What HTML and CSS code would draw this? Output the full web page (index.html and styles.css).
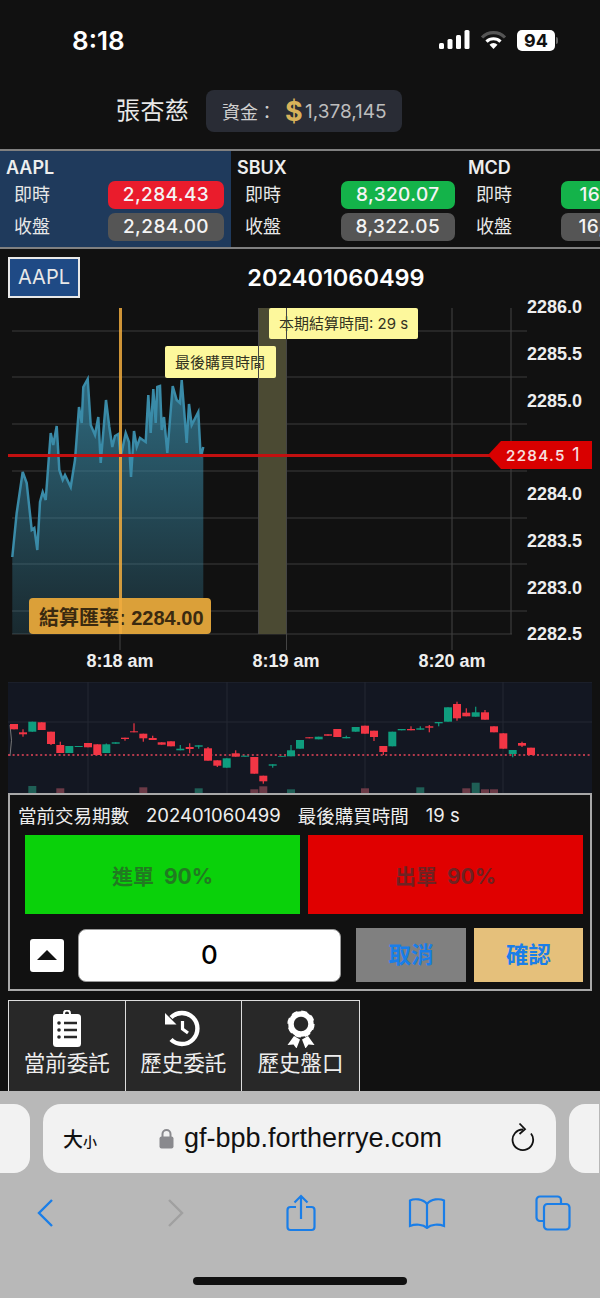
FILE: index.html
```html
<!DOCTYPE html>
<html lang="zh-Hant">
  <head>
    <meta charset="UTF-8" />
    <meta name="viewport" content="width=device-width, initial-scale=1.0" />
    <title>張杏慈</title>
    <link rel="stylesheet" href="styles.css">
  </head>
  <body>
    <div class="status-bar">
      <span class="clock">8:18</span>
      <div class="status-icons">
        <svg width="31" height="20" viewBox="0 0 31 20" fill="#fff">
          <rect x="0" y="13" width="5" height="6" rx="1.5" />
          <rect x="8.5" y="9" width="5" height="10" rx="1.5" />
          <rect x="17" y="5" width="5" height="14" rx="1.5" />
          <rect x="25.5" y="0" width="5" height="19" rx="1.5" />
        </svg>
        <svg width="27" height="20" viewBox="0 0 27 20" fill="none" stroke-linecap="butt">
          <path d="M2 7.5a16 16 0 0 1 23 0" stroke="#555" stroke-width="3.2" />
          <path d="M6.5 11.6a10 10 0 0 1 14 0" stroke="#fff" stroke-width="3.2" />
          <path d="M13.5 19l-4-4.2a5.6 5.6 0 0 1 8 0z" fill="#fff" />
        </svg>
        <div class="battery"><span class="battery-level">94</span><i class="battery-nub"></i></div>
      </div>
    </div>

    <header class="user-bar">
      <span class="user-name">張杏慈</span>
      <div class="funds">
        <span class="funds-label">資金：</span>
        <span class="funds-sign">$</span>
        <span class="funds-value">1,378,145</span>
      </div>
    </header>

    <section class="tickers">
      <div class="ticker active">
        <div class="ticker-name">AAPL</div>
        <div class="ticker-row"><span>即時</span><b class="pill red">2,284.43</b></div>
        <div class="ticker-row"><span>收盤</span><b class="pill gray">2,284.00</b></div>
      </div>
      <div class="ticker narrow">
        <div class="ticker-name">SBUX</div>
        <div class="ticker-row"><span>即時</span><b class="pill green">8,320.07</b></div>
        <div class="ticker-row"><span>收盤</span><b class="pill gray">8,322.05</b></div>
      </div>
      <div class="ticker wide">
        <div class="ticker-name">MCD</div>
        <div class="ticker-row"><span>即時</span><b class="pill green">16,512.30</b></div>
        <div class="ticker-row"><span>收盤</span><b class="pill gray">16,520.10</b></div>
      </div>
    </section>

    <div class="chart-head">
      <span class="symbol-btn">AAPL</span>
      <span class="chart-title">202401060499</span>
    </div>

    <svg class="price-chart" width="600" height="382" viewBox="0 300 600 382">
      <defs>
        <linearGradient id="areaFill" x1="0" y1="0" x2="0" y2="1">
          <stop offset="0" stop-color="#3a8ba8" stop-opacity="0.72" />
          <stop offset="1" stop-color="#3a8ba8" stop-opacity="0.2" />
        </linearGradient>
      </defs>
      <path class="grid" d="M12 331H527M12 377H527M12 424H527M12 471H527M12 518H527M12 564H527M12 611H527M12 634H512M452 308V650M511 308V634" />
      <rect class="band" x="258" y="308" width="29" height="326" />
      <path id="areaFillPath" fill="url(#areaFill)" />
      <path id="areaLine" class="area-line" />
      <rect class="tip" x="269" y="308" width="149" height="31" rx="2" />
      <text class="tip-text" x="279" y="329">本期結算時間: 29 s</text>
      <rect class="tip" x="165" y="346" width="111" height="32" rx="2" />
      <text class="tip-text" x="175" y="368">最後購買時間</text>
      <path class="band-edge" d="M258.5 308V634M286.5 308V650M120 634V650" />
      <rect class="settle" x="29" y="598" width="182" height="36" rx="4" />
      <text class="settle-text" x="39" y="625">結算匯率: 2284.00</text>
      <rect class="now-line" x="119" y="308" width="3" height="326" />
      <rect class="last-line" x="8" y="454" width="484" height="3" />
      <polygon class="last-tag" points="488,455 501,441 592,441 592,469 501,469" />
      <text class="last-text" x="506" y="461">2284.5</text>
      <text class="last-count" x="572" y="461">1</text>
      <g class="axis-y">
        <text x="527" y="313">2286.0</text>
        <text x="527" y="360">2285.5</text>
        <text x="527" y="407">2285.0</text>
        <text x="527" y="500">2284.0</text>
        <text x="527" y="547">2283.5</text>
        <text x="527" y="594">2283.0</text>
        <text x="527" y="640">2282.5</text>
      </g>
      <g class="axis-x">
        <text x="120" y="667">8:18 am</text>
        <text x="286" y="667">8:19 am</text>
        <text x="452" y="667">8:20 am</text>
      </g>
    </svg>

    <svg id="candles" class="candles" width="584" height="111" viewBox="8 682 584 111">
      <path class="candle-grid" d="M8 682H592M8 722H592M88 682V793M227 682V793M365 682V793M503 682V793" />
      <path class="candle-mark" d="M10 725Q13 740 10 756" />
      <line class="candle-last" x1="8" y1="755" x2="592" y2="755" />
    </svg>

    <section class="trade">
      <div class="trade-info">
        <span>當前交易期數</span>
        <span>202401060499</span>
        <span>最後購買時間</span>
        <span>19 s</span>
      </div>
      <div class="trade-sides">
        <div class="side buy">進單&nbsp;&nbsp;90%</div>
        <div class="side sell">出單&nbsp;&nbsp;90%</div>
      </div>
      <div class="trade-order">
        <span class="stepper"><i class="stepper-arrow"></i></span>
        <div class="amount">0</div>
        <span class="order-btn cancel">取消</span>
        <span class="order-btn confirm">確認</span>
      </div>
    </section>

    <nav class="tabs">
      <a class="tab">
        <svg width="36" height="38" viewBox="0 0 36 38">
          <rect x="4" y="4" width="28" height="33" rx="3.5" fill="#fff" />
          <circle cx="18" cy="3.5" r="3" fill="none" stroke="#fff" stroke-width="2" />
          <path d="M15 13H28M15 20H28M15 27H28" stroke="#282828" stroke-width="2.4" />
          <circle cx="10" cy="13" r="1.8" fill="#282828" />
          <circle cx="10" cy="20" r="1.8" fill="#282828" />
          <circle cx="10" cy="27" r="1.8" fill="#282828" />
        </svg>
        <span>當前委託</span>
      </a>
      <a class="tab">
        <svg width="38" height="38" viewBox="0 0 38 38" fill="none" stroke="#fff">
          <path d="M7 7.5A15.5 15.5 0 1 1 7 29.5" stroke-width="4.4" />
          <polygon points="1,3 1,14.5 12.5,14.5" fill="#fff" stroke="none" />
          <path d="M18.5 11V19L24 23" stroke-width="3.2" />
        </svg>
        <span>歷史委託</span>
      </a>
      <a class="tab">
        <svg width="30" height="38" viewBox="0 0 30 38" fill="#fff">
          <path d="M8 26L1.500 35L7.500 34.500L10.500 38.500L14 29.500ZM22 26L28.500 35L22.500 34.500L19.500 38.500L16 29.500Z" />
          <circle cx="15" cy="14" r="10" fill="none" stroke="#fff" stroke-width="5.500" />
          <circle cx="15" cy="14" r="12.500" fill="none" stroke="#fff" stroke-width="2.200" stroke-dasharray="6 3.800" />
        </svg>
        <span>歷史盤口</span>
      </a>
    </nav>

    <div class="safari">
      <div class="url-row">
        <div class="url-stub"></div>
        <div class="url-bar">
          <span class="url-size">大<small>小</small></span>
          <div class="url-host">
            <svg width="15" height="21" viewBox="0 0 15 21">
              <path d="M3.5 9V6a4 4 0 0 1 8 0v3" fill="none" stroke="#8a8a8e" stroke-width="2" />
              <rect x="0.5" y="8.5" width="14" height="12" rx="2" fill="#8a8a8e" />
            </svg>
            <span>gf-bpb.fortherrye.com</span>
          </div>
          <svg class="url-reload" width="24" height="30" viewBox="0 0 24 30" fill="none" stroke="#111" stroke-width="1.8">
            <path d="M20 11.5A10.3 10.3 0 1 1 12 7.5" />
            <path d="M8.5 1.5L14 7.2L8.5 12" />
          </svg>
        </div>
        <div class="url-stub right"></div>
      </div>
      <div class="toolbar">
        <svg width="18" height="30" viewBox="0 0 18 30" fill="none" stroke="#1a7ee8" stroke-width="2.4">
          <path d="M16 2L3 15L16 28" />
        </svg>
        <svg width="18" height="30" viewBox="0 0 18 30" fill="none" stroke="#a0a0a0" stroke-width="2.4">
          <path d="M2 2L15 15L2 28" />
        </svg>
        <svg width="30" height="38" viewBox="0 0 30 38" fill="none" stroke="#1a7ee8" stroke-width="2.2">
          <path d="M10 13H4.500a3 3 0 0 0-3 3V33a3 3 0 0 0 3 3H25.500a3 3 0 0 0 3-3V16a3 3 0 0 0-3-3H20" />
          <path d="M15 25V2M8.500 8.500L15 2L21.500 8.500" />
        </svg>
        <svg width="38" height="32" viewBox="0 0 38 32" fill="none" stroke="#1a7ee8" stroke-width="2.2">
          <path d="M19 7C15 1.500 6 1.500 2 3.500V29C7 27 15 27 19 31C23 27 31 27 36 29V3.500C32 1.500 23 1.500 19 7V31" />
        </svg>
        <svg width="36" height="36" viewBox="0 0 36 36" fill="none" stroke="#1a7ee8" stroke-width="2.2">
          <path d="M9 26H5a3.500 3.500 0 0 1-3.500-3.500V5A3.500 3.500 0 0 1 5 1.500H22.500A3.500 3.500 0 0 1 26 5V9" />
          <rect x="9" y="9" width="25.500" height="25.500" rx="3.500" />
        </svg>
      </div>
      <div class="home-bar"></div>
    </div>

    <script src="chart.js"></script>
  </body>
</html>
```

FILE: styles.css
```css
:root {
  --bg: #111111;
  --blue: #1a7ee8;
  --cjk: Inter, "Noto Sans CJK TC", sans-serif;
}

body {
  margin: 0;
  width: 600px;
  height: 1298px;
  overflow: hidden;
  background-color: var(--bg);
  color: #ffffff;
  font-family: var(--cjk);
}

svg {
  display: block;
}

/* status bar */
.status-bar {
  height: 80px;
  box-sizing: border-box;
  padding: 0 42px 0 72px;
  display: flex;
  justify-content: space-between;
  align-items: center;
}

.clock {
  font-size: 26px;
  font-weight: 600;
}

.status-icons {
  display: flex;
  align-items: center;
  gap: 10px;
}

.battery {
  display: flex;
  align-items: center;
  gap: 1px;
}

.battery-level {
  width: 38px;
  height: 21px;
  border-radius: 5px;
  background-color: #ffffff;
  color: #111111;
  font-size: 18px;
  font-weight: 700;
  line-height: 21px;
  text-align: center;
}

.battery-nub {
  width: 2px;
  height: 7px;
  border-radius: 0 2px 2px 0;
  background-color: #666666;
}

/* user */
.user-bar {
  height: 69px;
  box-sizing: border-box;
  padding: 10px 0 0 116px;
  display: flex;
  align-items: flex-start;
  gap: 17px;
}

.user-name {
  width: 73px;
  font-size: 24px;
  line-height: 42px;
  color: #e8e8e8;
  letter-spacing: 0.4px;
  white-space: nowrap;
}

.funds {
  width: 196px;
  height: 42px;
  box-sizing: border-box;
  padding-left: 16px;
  display: flex;
  align-items: center;
  background-color: #292c35;
  border-radius: 8px;
}

.funds-label {
  width: 63px;
  font-size: 18px;
  color: #cfcfcf;
}

.funds-sign {
  width: 20px;
  font-size: 27px;
  font-weight: 700;
  color: #d8b25a;
}

.funds-value {
  font-size: 19px;
  color: #bdbdbd;
}

/* tickers */
.tickers {
  height: 100px;
  box-sizing: border-box;
  border-top: 2px solid #808080;
  border-bottom: 2px solid #808080;
  display: flex;
  overflow: hidden;
}

.ticker {
  flex: 0 0 231px;
  box-sizing: border-box;
  padding: 6px 7px 0 6px;
}

.ticker.active {
  background-color: #1f3a5c;
}

.ticker.wide {
  flex-basis: 232px;
}

.ticker-name {
  height: 24px;
  font-size: 18px;
  font-weight: 600;
  line-height: 22px;
  color: #eeeeee;
}

.ticker-row {
  height: 28px;
  margin-bottom: 3.5px;
  padding-left: 8px;
  display: flex;
  justify-content: space-between;
  align-items: center;
  font-size: 18px;
  color: #e8e8e8;
  white-space: nowrap;
}

.ticker-row span {
  padding-bottom: 4px;
}

.pill {
  width: 116px;
  height: 28px;
  flex: none;
  border-radius: 7px;
  font-size: 19px;
  font-weight: 500;
  line-height: 28px;
  letter-spacing: 0.4px;
  text-align: center;
  color: #f4f4f4;
}

.pill.red {
  background-color: #ea1c2c;
}

.pill.green {
  background-color: #14b34a;
}

.pill.gray {
  background-color: #555555;
}

.narrow .pill {
  width: 114.5px;
}

.wide .pill.green {
  width: 126px;
}

.wide .pill.gray {
  width: 123px;
  margin-right: 3px;
}

/* price chart */
.chart-head {
  height: 51px;
  box-sizing: border-box;
  padding: 8px 8px 0;
  display: flex;
  align-items: flex-start;
}

.symbol-btn {
  width: 72px;
  height: 41px;
  box-sizing: border-box;
  border: 2px solid #e8e8e8;
  background-color: #1f4a85;
  font-size: 20px;
  line-height: 37px;
  text-align: center;
  color: #e8e8e8;
}

.chart-title {
  flex: 1;
  font-size: 23.5px;
  font-weight: 600;
  line-height: 41px;
  text-align: center;
}

.grid {
  fill: none;
  stroke: #3c3c3c;
  stroke-width: 1.2;
}

.band {
  fill: #4b4a33;
}

.band-edge {
  fill: none;
  stroke: #444444;
  stroke-width: 1;
}

.area-line {
  fill: none;
  stroke: #3a8ba8;
  stroke-width: 2.5;
}

.tip {
  fill: #fdf89c;
}

.tip-text {
  font-size: 15px;
  fill: #333322;
}

.settle {
  fill: #dba039;
}

.settle-text {
  font-family: "Liberation Sans", "Noto Sans CJK TC", sans-serif;
  font-size: 20px;
  font-weight: 700;
  fill: #3a2a10;
}

.now-line {
  fill: #f0ab3e;
  fill-opacity: 0.85;
}

.last-line {
  fill: #c21010;
}

.last-tag {
  fill: #d90000;
}

.last-text {
  font-size: 15px;
  font-weight: 600;
  letter-spacing: 1.3px;
  fill: #f6dcdc;
}

.last-count {
  font-size: 19px;
  fill: #f6dcdc;
}

.axis-y text,
.axis-x text {
  font-family: "Liberation Sans", sans-serif;
  font-size: 18px;
  font-weight: 700;
  fill: #eeeeee;
}

.axis-x text {
  text-anchor: middle;
}

/* candles */
.candles {
  margin-left: 8px;
  background-color: #131722;
}

.candle-grid {
  fill: none;
  stroke: #242833;
  stroke-width: 1;
}

.candle-mark {
  fill: none;
  stroke: #777777;
  stroke-width: 1;
}

.candle-last {
  stroke: #e8455a;
  stroke-width: 1.3;
  stroke-dasharray: 2 2.600;
}

/* trade panel */
.trade {
  width: 584px;
  height: 198px;
  margin-left: 8px;
  box-sizing: border-box;
  border: 2px solid #a8a8a8;
}

.trade-info {
  height: 40px;
  padding-left: 8px;
  display: flex;
  align-items: center;
  gap: 17px;
  font-size: 18.5px;
  color: #eeeeee;
  white-space: nowrap;
}

.trade-sides {
  height: 79px;
  padding: 0 7px 0 15px;
  display: flex;
  gap: 8px;
}

.side {
  flex: 1;
  display: flex;
  justify-content: center;
  align-items: center;
  font-size: 21px;
  font-weight: 700;
}

.side.buy {
  background-color: #0ad10a;
  color: #217a21;
}

.side.sell {
  background-color: #e00000;
  color: #6e2222;
}

.trade-order {
  margin-top: 14px;
  padding: 0 7px 0 20px;
  display: flex;
  align-items: center;
}

.stepper {
  width: 34px;
  height: 33px;
  margin: 0 14px 0 0;
  display: flex;
  justify-content: center;
  align-items: center;
  background-color: #ffffff;
  border-radius: 3px;
}

.stepper-arrow {
  width: 0;
  height: 0;
  border-left: 10px solid transparent;
  border-right: 10px solid transparent;
  border-bottom: 10px solid #111111;
}

.amount {
  width: 263px;
  height: 53px;
  box-sizing: border-box;
  margin-right: 15px;
  border: 1.5px solid #999999;
  border-radius: 8px;
  background-color: #ffffff;
  color: #000000;
  font-size: 26px;
  font-weight: 500;
  line-height: 50px;
  text-align: center;
}

.order-btn {
  height: 54px;
  color: var(--blue);
  font-size: 22.5px;
  font-weight: 700;
  line-height: 54px;
  text-align: center;
}

.order-btn.cancel {
  width: 110px;
  margin-right: 8px;
  background-color: #808080;
}

.order-btn.confirm {
  width: 109px;
  background-color: #e5c07b;
}

/* tabs */
.tabs {
  margin: 9px 0 0 8px;
  height: 91px;
  display: flex;
}

.tab {
  width: 117.5px;
  box-sizing: border-box;
  border: 1.5px solid #dddddd;
  border-bottom: none;
  margin-right: -1px;
  padding-top: 9px;
  display: flex;
  flex-direction: column;
  align-items: center;
  background-color: #282828;
  font-size: 21.5px;
  line-height: 30px;
  color: #eeeeee;
}

.tab:last-child {
  width: 119px;
}

/* browser chrome */
.safari {
  height: 207px;
  box-sizing: border-box;
  padding-top: 13px;
  background-color: #b8b8b8;
  position: relative;
}

.url-row {
  display: flex;
  gap: 13px;
}

.url-stub {
  flex: 0 0 30px;
  height: 69px;
  border-radius: 0 16px 16px 0;
  background-color: #f2f2f2;
}

.url-stub.right {
  border-radius: 16px 0 0 16px;
}

.url-bar {
  flex: 0 0 513px;
  height: 69px;
  box-sizing: border-box;
  padding: 0 21px 0 20px;
  display: flex;
  align-items: center;
  border-radius: 18px;
  background-color: #f2f2f2;
  color: #111111;
}

.url-size {
  width: 96px;
  font-size: 20px;
  font-weight: 500;
}

.url-size small {
  font-size: 14px;
}

.url-host {
  flex: 1;
  display: flex;
  align-items: center;
  gap: 10px;
  font-family: "Liberation Sans", sans-serif;
  font-size: 27px;
}

.url-reload {
  margin-top: -4px;
}

.toolbar {
  height: 56px;
  margin-top: 12px;
  padding-left: 36px;
  display: grid;
  grid-template-columns: 131px 119px 122px 127px 36px;
  align-items: center;
}

.home-bar {
  position: absolute;
  left: 193px;
  bottom: 13px;
  width: 214px;
  height: 8px;
  border-radius: 4px;
  background-color: #111111;
}
```

FILE: chart.js
```js
const SVG_NS = "http://www.w3.org/2000/svg";

// price samples, x and y in chart pixels
const prices = [
  [12.3, 557], [16.7, 513], [22.7, 472], [26.7, 483], [31.7, 530], [34.3, 528],
  [37.3, 550], [40, 502], [42.7, 492], [45.7, 500], [50.7, 433], [53.3, 445],
  [56.7, 426], [59.3, 470], [62.7, 480], [65, 475], [70.7, 487], [75, 460],
  [79, 407], [81.7, 423], [83.3, 387], [87.7, 379], [90.7, 425], [95, 435],
  [98.3, 417], [100.7, 463], [106, 400], [109.3, 427], [112.3, 447], [115, 436],
  [118.3, 434], [120.7, 457], [125.7, 433], [129, 442], [131, 477], [134, 431],
  [136.7, 447], [140, 438], [145.7, 442], [148.3, 395], [150.7, 433], [153.3, 389],
  [155.7, 423], [157.3, 387], [160, 386], [161.7, 430], [164, 417], [167.3, 453],
  [172.7, 386], [176.7, 400], [180, 403], [181.7, 380], [186.7, 443], [189, 404],
  [191.7, 425], [198.3, 412], [200.7, 457], [203.3, 447],
];

const line = prices.map(([x, y], i) => `${i ? "L" : "M"}${x} ${y}`).join("");
document.getElementById("areaLine").setAttribute("d", line);
document
  .getElementById("areaFillPath")
  .setAttribute("d", `${line}L203.3 634L12.3 634Z`);

// candles: center x, body top, body bottom, wick top, wick bottom, up?
const candles = [
  [14, 724, 729.3, 724, 729.3, 0], [23, 732.3, 734.3, 729.3, 736.7, 0],
  [32.3, 721.7, 731.7, 721.7, 731.7, 1], [41.7, 722.3, 730, 722.3, 730, 0],
  [51, 731.7, 744, 731.7, 745, 0], [60.3, 745, 753, 741.7, 753, 0],
  [69.3, 746, 753, 746, 753, 1], [78.7, 746, 747, 746, 747, 1],
  [88, 743, 747.3, 743, 747.3, 0], [97.3, 744.3, 755, 744.3, 755, 0],
  [106.3, 744.3, 753, 743.5, 753, 1], [115.7, 742.3, 743.7, 742.3, 743.7, 1],
  [125, 737.7, 739, 737.7, 740.7, 0], [134, 731.3, 732.3, 723.3, 732.3, 0],
  [143.3, 733.7, 738.3, 733.7, 741.7, 0], [152.7, 738, 740, 735.7, 740, 0],
  [161.7, 742.3, 744.7, 742.3, 744.7, 0], [171, 741.3, 746.3, 741.3, 746.3, 0],
  [180.3, 748.7, 750.3, 745, 750.3, 1], [189.7, 747, 749, 743.3, 753.3, 0],
  [198.7, 745.3, 746.7, 745.3, 748.7, 1], [208, 748.3, 760.7, 747, 760.7, 0],
  [217.3, 760.3, 765.7, 760.3, 767, 0], [226.7, 758.3, 767.7, 758.3, 767.7, 1],
  [235.7, 753.3, 756.7, 750.3, 756.7, 0], [245, 755.7, 756.7, 755.7, 756.7, 1],
  [254.3, 757, 773.7, 757, 773.7, 0], [263.3, 775.7, 781.3, 775.7, 783.7, 0],
  [272.7, 764.3, 765.7, 764.3, 767.7, 1], [282, 756, 756.7, 756, 756.7, 1],
  [291, 750.3, 756.3, 745, 756.3, 1], [300, 740, 748.7, 740, 748.7, 1],
  [309.3, 737.3, 738.3, 737.3, 738.3, 0], [318.7, 736.7, 739.3, 736.7, 739.3, 1],
  [328, 734.3, 735.7, 734.3, 735.7, 0], [337.3, 729, 737, 729, 737, 0],
  [346.3, 737, 738.3, 735.7, 738.3, 1], [355.7, 727, 731.7, 727, 731.7, 1],
  [365, 725.7, 733.7, 725.7, 733.7, 0], [374, 730.7, 737, 730.7, 741, 0],
  [383.3, 746, 752, 746, 755, 0], [392.3, 731.7, 746.3, 731.7, 746.3, 1],
  [401.7, 729, 730.3, 729, 730.3, 1], [411, 729, 730.3, 726.3, 730.3, 0],
  [420.3, 728.3, 729.7, 726.3, 729.7, 1], [429.3, 726.3, 727.7, 725, 732.3, 0],
  [438.7, 722, 723.3, 722, 726.3, 1], [448, 707.3, 721.7, 707.3, 721.7, 1],
  [457, 704, 718.3, 701.7, 720.7, 0], [466.3, 712.7, 716.3, 708.3, 716.3, 0],
  [475.7, 712.3, 716.7, 706.7, 716.7, 1], [485, 712.3, 719.7, 710, 719.7, 0],
  [494, 726.3, 732.3, 726.3, 732.3, 0], [503.3, 733.3, 748.7, 733.3, 748.7, 0],
  [512.7, 750, 754, 750, 757.3, 1], [522, 743, 745.7, 741.7, 747, 0],
  [531, 747.7, 755, 747.7, 755, 0],
];

// volume stubs along the bottom edge: center x, top y, up?
const volumes = [
  [32.3, 786, 1], [60.3, 788.3, 0], [143.3, 787.3, 0], [198.7, 788.3, 1],
  [254.3, 789.3, 0], [263.3, 786.3, 0], [291, 789.3, 1], [365, 788.3, 0],
  [420.3, 787.3, 1], [466.3, 788.3, 0], [475.7, 782.7, 1], [485, 789.3, 0],
  [494, 789.3, 0],
];

const candlesSvg = document.getElementById("candles");

function addShape(name, attrs) {
  const el = document.createElementNS(SVG_NS, name);
  Object.keys(attrs).forEach((key) => el.setAttribute(key, attrs[key]));
  candlesSvg.appendChild(el);
}

volumes.forEach(([x, top, up]) => {
  addShape("rect", {
    x: x - 4,
    y: top,
    width: 8,
    height: 793 - top,
    fill: up ? "#1f5f56" : "#6b3a46",
  });
});

candles.forEach(([x, top, bottom, wickTop, wickBottom, up]) => {
  const color = up ? "#0f9d7e" : "#f23645";
  addShape("rect", {
    x: x - 0.6,
    y: wickTop,
    width: 1.2,
    height: wickBottom - wickTop,
    fill: color,
  });
  addShape("rect", {
    x: x - 4,
    y: top,
    width: 8,
    height: bottom - top,
    fill: color,
  });
});
```
